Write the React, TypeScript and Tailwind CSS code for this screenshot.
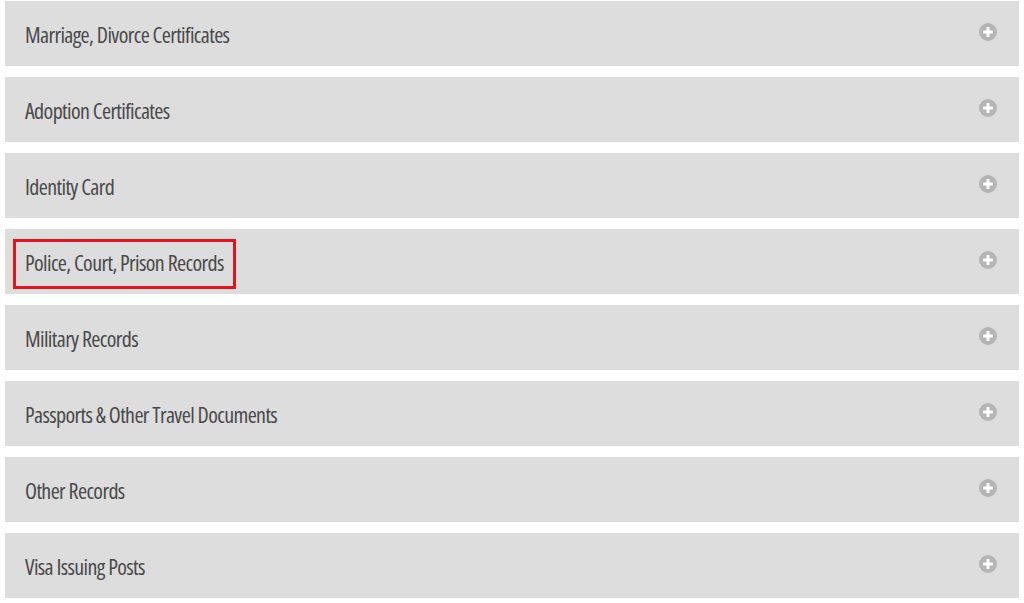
import React from 'react';

const items = [
  'Marriage, Divorce Certificates',
  'Adoption Certificates',
  'Identity Card',
  'Police, Court, Prison Records',
  'Military Records',
  'Passports & Other Travel Documents',
  'Other Records',
  'Visa Issuing Posts',
];

const PlusIcon: React.FC = () => (
  <svg width="18" height="18" viewBox="0 0 18 18" className="shrink-0 mb-[3px]">
    <circle cx="9" cy="9" r="9" fill="#b5b5b5" />
    <rect x="4" y="7.5" width="10" height="3" rx="0.5" fill="#ffffff" />
    <rect x="7.5" y="4" width="3" height="10" rx="0.5" fill="#ffffff" />
  </svg>
);

const App: React.FC = () => {
  return (
    <div className="w-[1024px] h-[603px] bg-white pt-[1px] px-[5px] flex flex-col gap-[11px]">
      {items.map((title, index) => (
        <div
          key={index}
          className="h-[65px] bg-[#dddddd] flex items-center justify-between pl-[20px] pr-[22px]"
        >
          <div className="relative">
            <span className="block leading-[30px] text-[22px] font-medium text-[#4a4a4a] tracking-[-0.62px] font-['Open_Sans',sans-serif] [font-stretch:75%]">
              {title}
            </span>
            {index === 3 && (
              <div className="absolute left-[-12px] right-[-12px] top-[-8px] bottom-[-12px] border-[3px] border-[#e3141f]" />
            )}
          </div>
          <PlusIcon />
        </div>
      ))}
    </div>
  );
};

export default App;
